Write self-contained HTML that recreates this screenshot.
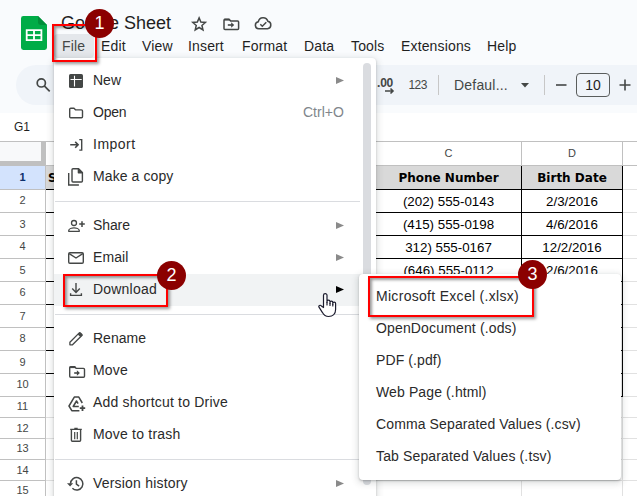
<!DOCTYPE html>
<html><head><meta charset="utf-8"><title>Google Sheet</title>
<style>
*{box-sizing:border-box;margin:0;padding:0}
html,body{width:637px;height:496px;overflow:hidden;background:#fff}
body{position:relative;font-family:"Liberation Sans",sans-serif;color:#1f1f1f}
.a{position:absolute}
.t{position:absolute;white-space:nowrap;line-height:20px;height:20px}
.hdr{left:0;top:0;width:637px;height:113px;background:#f9fbfd}
.title{font-size:18px;color:#1f1f1f;left:61px;top:13px;letter-spacing:0}
.mb{font-size:14px;color:#1f1f1f;top:36px;letter-spacing:.15px}
.tb{left:16px;top:65px;width:640px;height:40px;border-radius:20px;background:#f0f4f9}
.mi{font-size:14px;color:#2a2a2a;left:93px;letter-spacing:.2px}
.si{font-size:14px;color:#2a2a2a;left:376px;letter-spacing:.2px}
.rn{font-size:11px;color:#444746;text-align:center}
.ch{font-size:11px;color:#444746;text-align:center}
.hc{font-size:12px;font-weight:bold;color:#000;text-align:center;font-family:"DejaVu Sans","Liberation Sans",sans-serif}
.cell{font-size:13.33px;color:#000;text-align:center}
.gl{background:#e1e1e1}
.bk{background:#000}
svg{position:absolute;overflow:visible}
</style></head><body>
<!-- header -->
<div class="a hdr"></div>
<!-- logo -->
<svg style="left:21px;top:16px" width="26" height="34" viewBox="0 0 26 34">
<path d="M2.4 0h14.6L26 9v22.6a2.4 2.4 0 0 1-2.4 2.4H2.4A2.4 2.4 0 0 1 0 31.600V2.400A2.400 2.400 0 0 1 2.400 0z" fill="#00ac47"/>
<path d="M17 0l9 9h-6.600A2.400 2.400 0 0 1 17 6.600z" fill="#008f3a"/>
<path d="M4.800 13.300h16.500v11.700H4.800zM6.600 15.100v3.100h5.500v-3.100zM13.900 15.100v3.100h5.600v-3.100zM6.600 20v3.200h5.500V20zM13.900 20v3.200h5.600V20z" fill="#fff" fill-rule="evenodd"/>
</svg>
<div class="t title">Google Sheet</div>
<!-- title icons -->
<svg style="left:0;top:0" width="637" height="60" viewBox="0 0 637 60" fill="none" stroke="#444746" stroke-width="1.500" stroke-linejoin="miter"><path d="M199.10 17.90L200.86 22.07L205.38 22.46L201.95 25.43L202.98 29.84L199.10 27.50L195.22 29.84L196.25 25.43L192.82 22.46L197.34 22.07z"/><path d="M224 20.300a1 1 0 0 1 1-1h4l1.600 1.600h7a1 1 0 0 1 1 1v6.500a1 1 0 0 1-1 1H225a1 1 0 0 1-1-1z" stroke-linejoin="round"/><path d="M224 19.700h5.600" stroke-width="1.800"/><path d="M227.800 25h4" stroke-width="1.600"/><path d="M231.200 22.300l3 2.700-3 2.700z" fill="#444746" stroke="none"/><path d="M258.700 28.700a3.500 3.500 0 0 1-.400-6.950 4.900 4.900 0 0 1 9.500-.450 3.750 3.750 0 0 1-.300 7.400z" stroke-linejoin="round"/><path d="M260.300 24.200l2 2 4-4" stroke-width="1.500"/></svg>
<!-- menubar -->
<div class="a" style="left:54px;top:34px;width:40px;height:24px;border-radius:4px;background:#e4e7eb"></div>
<div class="t mb" style="left:62px;color:#444746">File</div>
<div class="t mb" style="left:101px">Edit</div>
<div class="t mb" style="left:142px">View</div>
<div class="t mb" style="left:188px">Insert</div>
<div class="t mb" style="left:242px">Format</div>
<div class="t mb" style="left:304px">Data</div>
<div class="t mb" style="left:351px">Tools</div>
<div class="t mb" style="left:401px">Extensions</div>
<div class="t mb" style="left:487px">Help</div>
<!-- toolbar -->
<div class="a tb"></div>
<svg style="left:36px;top:78px" width="15" height="15" viewBox="0 0 15 15" fill="none" stroke="#444746" stroke-width="1.700"><circle cx="5.300" cy="4.900" r="4.100"/><path d="M8.300 7.900l5.400 5.400"/></svg>
<div class="t" style="left:377px;top:73px;font-size:12px;font-weight:bold;color:#444746;letter-spacing:-.2px">.00</div>
<svg style="left:384.500px;top:88.300px" width="9" height="6" viewBox="0 0 9 6" fill="none" stroke="#444746" stroke-width="1.600"><path d="M0 3h8M5.500 .500L8 3 5.500 5.500"/></svg>
<div class="t" style="left:408.500px;top:75px;font-size:12px;color:#444746;letter-spacing:-.6px">123</div>
<div class="a" style="left:438px;top:75px;width:1px;height:20px;background:#c7c7c7"></div>
<div class="t" style="left:454px;top:75px;font-size:14px;color:#444746;letter-spacing:.2px">Defaul...</div>
<svg style="left:521px;top:83px" width="8" height="4.500" viewBox="0 0 8 4.500"><path d="M0 0h8L4 4.500z" fill="#444746"/></svg>
<div class="a" style="left:544px;top:75px;width:1px;height:20px;background:#c7c7c7"></div>
<svg style="left:555px;top:80px" width="12" height="10" viewBox="0 0 12 10"><path d="M1 5h10.500" stroke="#444746" stroke-width="1.600"/></svg>
<div class="a" style="left:576px;top:73px;width:34px;height:24px;border:1px solid #5a5d5c;border-radius:4px;background:#f0f4f9"></div>
<div class="t" style="left:576px;width:34px;text-align:center;top:75px;font-size:14px;color:#1f1f1f">10</div>
<svg style="left:619px;top:79px" width="12" height="12" viewBox="0 0 12 12"><path d="M.5 6h11M6 .5v11" stroke="#444746" stroke-width="1.600"/></svg>
<!-- name box -->
<div class="t" style="left:14px;top:117px;font-size:12px;color:#1f1f1f">G1</div>
<!-- grid -->
<div class="a" style="left:0px;top:141px;width:637px;height:360px;background:#fff"></div>
<div class="a" style="left:46px;top:189px;width:591px;height:1px;background:#e1e1e1"></div>
<div class="a" style="left:46px;top:212px;width:591px;height:1px;background:#e1e1e1"></div>
<div class="a" style="left:46px;top:235px;width:591px;height:1px;background:#e1e1e1"></div>
<div class="a" style="left:46px;top:258px;width:591px;height:1px;background:#e1e1e1"></div>
<div class="a" style="left:46px;top:281px;width:591px;height:1px;background:#e1e1e1"></div>
<div class="a" style="left:46px;top:304px;width:591px;height:1px;background:#e1e1e1"></div>
<div class="a" style="left:46px;top:327px;width:591px;height:1px;background:#e1e1e1"></div>
<div class="a" style="left:46px;top:350px;width:591px;height:1px;background:#e1e1e1"></div>
<div class="a" style="left:46px;top:373px;width:591px;height:1px;background:#e1e1e1"></div>
<div class="a" style="left:46px;top:396px;width:591px;height:1px;background:#e1e1e1"></div>
<div class="a" style="left:46px;top:417px;width:591px;height:1px;background:#e1e1e1"></div>
<div class="a" style="left:46px;top:438px;width:591px;height:1px;background:#e1e1e1"></div>
<div class="a" style="left:46px;top:459px;width:591px;height:1px;background:#e1e1e1"></div>
<div class="a" style="left:46px;top:480px;width:591px;height:1px;background:#e1e1e1"></div>
<div class="a" style="left:521px;top:166px;width:1px;height:340px;background:#e1e1e1"></div>
<div class="a" style="left:622px;top:166px;width:1px;height:340px;background:#e1e1e1"></div>
<div class="a" style="left:0px;top:141px;width:637px;height:1px;background:#c0c0c0"></div>
<div class="a" style="left:0px;top:165px;width:637px;height:1px;background:#c0c0c0"></div>
<div class="a" style="left:0px;top:142px;width:46px;height:23px;background:#f8f9fa"></div>
<div class="a" style="left:521px;top:142px;width:1px;height:23px;background:#c0c0c0"></div>
<div class="a" style="left:622px;top:142px;width:1px;height:23px;background:#c0c0c0"></div>
<div class="t ch" style="left:375px;top:143px;width:147px">C</div>
<div class="t ch" style="left:522px;top:143px;width:100px">D</div>
<div class="a" style="left:41px;top:142px;width:4px;height:24px;background:#c0c0c0"></div>
<div class="a" style="left:0px;top:161px;width:45px;height:4px;background:#c0c0c0"></div>
<div class="a" style="left:45px;top:141px;width:1px;height:360px;background:#c0c0c0"></div>
<div class="a" style="left:0px;top:166px;width:45px;height:23px;background:#d3e3fd"></div>
<div class="a" style="left:0px;top:189px;width:45px;height:1px;background:#c0c0c0"></div>
<div class="a" style="left:0px;top:212px;width:45px;height:1px;background:#c0c0c0"></div>
<div class="a" style="left:0px;top:235px;width:45px;height:1px;background:#c0c0c0"></div>
<div class="a" style="left:0px;top:258px;width:45px;height:1px;background:#c0c0c0"></div>
<div class="a" style="left:0px;top:281px;width:45px;height:1px;background:#c0c0c0"></div>
<div class="a" style="left:0px;top:304px;width:45px;height:1px;background:#c0c0c0"></div>
<div class="a" style="left:0px;top:327px;width:45px;height:1px;background:#c0c0c0"></div>
<div class="a" style="left:0px;top:350px;width:45px;height:1px;background:#c0c0c0"></div>
<div class="a" style="left:0px;top:373px;width:45px;height:1px;background:#c0c0c0"></div>
<div class="a" style="left:0px;top:396px;width:45px;height:1px;background:#c0c0c0"></div>
<div class="a" style="left:0px;top:417px;width:45px;height:1px;background:#c0c0c0"></div>
<div class="a" style="left:0px;top:438px;width:45px;height:1px;background:#c0c0c0"></div>
<div class="a" style="left:0px;top:459px;width:45px;height:1px;background:#c0c0c0"></div>
<div class="a" style="left:0px;top:480px;width:45px;height:1px;background:#c0c0c0"></div>
<div class="t rn" style="left:0px;top:167px;width:45px;font-weight:bold;color:#0b2f6b">1</div>
<div class="t rn" style="left:0px;top:190px;width:45px">2</div>
<div class="t rn" style="left:0px;top:214px;width:45px">3</div>
<div class="t rn" style="left:0px;top:236px;width:45px">4</div>
<div class="t rn" style="left:0px;top:260px;width:45px">5</div>
<div class="t rn" style="left:0px;top:282px;width:45px">6</div>
<div class="t rn" style="left:0px;top:306px;width:45px">7</div>
<div class="t rn" style="left:0px;top:328px;width:45px">8</div>
<div class="t rn" style="left:0px;top:352px;width:45px">9</div>
<div class="t rn" style="left:0px;top:374px;width:45px">10</div>
<div class="t rn" style="left:0px;top:396px;width:45px">11</div>
<div class="t rn" style="left:0px;top:418px;width:45px">12</div>
<div class="t rn" style="left:0px;top:438px;width:45px">13</div>
<div class="t rn" style="left:0px;top:460px;width:45px">14</div>
<div class="t rn" style="left:0px;top:480px;width:45px">15</div>
<div class="a" style="left:46px;top:166px;width:576px;height:23px;background:#d9d9d9"></div>
<div class="a" style="left:46px;top:189px;width:577px;height:1px;background:#000"></div>
<div class="a" style="left:46px;top:212px;width:577px;height:1px;background:#000"></div>
<div class="a" style="left:46px;top:235px;width:577px;height:1px;background:#000"></div>
<div class="a" style="left:46px;top:258px;width:577px;height:1px;background:#000"></div>
<div class="a" style="left:46px;top:281px;width:577px;height:1px;background:#000"></div>
<div class="a" style="left:46px;top:304px;width:577px;height:1px;background:#000"></div>
<div class="a" style="left:46px;top:327px;width:577px;height:1px;background:#000"></div>
<div class="a" style="left:46px;top:350px;width:577px;height:1px;background:#000"></div>
<div class="a" style="left:46px;top:373px;width:577px;height:1px;background:#000"></div>
<div class="a" style="left:46px;top:396px;width:577px;height:1px;background:#000"></div>
<div class="a" style="left:521px;top:166px;width:1px;height:231px;background:#000"></div>
<div class="a" style="left:622px;top:166px;width:1px;height:231px;background:#000"></div>
<div class="t hc" style="left:48px;top:168px;width:40px;text-align:left">S</div>
<div class="t hc" style="left:375px;top:168px;width:147px">Phone Number</div>
<div class="t hc" style="left:522px;top:168px;width:100px">Birth Date</div>
<div class="t cell" style="left:375px;top:192px;width:147px">(202) 555-0143</div>
<div class="t cell" style="left:522px;top:192px;width:100px">2/3/2016</div>
<div class="t cell" style="left:375px;top:215px;width:147px">(415) 555-0198</div>
<div class="t cell" style="left:522px;top:215px;width:100px">4/6/2016</div>
<div class="t cell" style="left:375px;top:238px;width:147px">312) 555-0167</div>
<div class="t cell" style="left:522px;top:238px;width:100px">12/2/2016</div>
<div class="t cell" style="left:375px;top:261px;width:147px">(646) 555-0112</div>
<div class="t cell" style="left:522px;top:261px;width:100px">2/6/2016</div>
<!-- menu -->
<div class="a" style="left:54px;top:58px;width:322px;height:452px;background:#fff;border-radius:4px;box-shadow:0 2px 6px 2px rgba(60,64,67,.15),0 1px 2px rgba(60,64,67,.3)"></div>
<div class="a" style="left:54px;top:274px;width:310px;height:32px;background:#f1f3f4"></div>
<div class="a" style="left:363px;top:63px;width:8px;height:422px;border-radius:4px;background:#dadce0"></div>
<div class="a" style="left:55px;top:201px;width:305px;height:1px;background:#dadce0"></div>
<div class="a" style="left:55px;top:314px;width:305px;height:1px;background:#dadce0"></div>
<div class="a" style="left:55px;top:459px;width:305px;height:1px;background:#dadce0"></div>
<div class="t mi" style="top:70px;letter-spacing:0.0px">New</div>
<div class="t mi" style="top:102px;letter-spacing:-0.2px">Open</div>
<div class="t mi" style="top:134px;letter-spacing:0.5px">Import</div>
<div class="t mi" style="top:166px;letter-spacing:0.1px">Make a copy</div>
<div class="t mi" style="top:215px;letter-spacing:-0.1px">Share</div>
<div class="t mi" style="top:247px;letter-spacing:0.1px">Email</div>
<div class="t mi" style="top:279px;letter-spacing:0.2px">Download</div>
<div class="t mi" style="top:328px;letter-spacing:0px">Rename</div>
<div class="t mi" style="top:360px">Move</div>
<div class="t mi" style="top:392px">Add shortcut to Drive</div>
<div class="t mi" style="top:424px">Move to trash</div>
<div class="t mi" style="top:473px">Version history</div>
<div class="t" style="left:303px;top:102px;font-size:14px;color:#80868b">Ctrl+O</div>
<!-- arrows -->
<svg style="left:336px;top:77px" width="8" height="7" viewBox="0 0 8 7"><path d="M0 0l8 3.500-8 3.500z" fill="#8a8a8a"/></svg>
<svg style="left:336px;top:222px" width="8" height="7" viewBox="0 0 8 7"><path d="M0 0l8 3.500-8 3.500z" fill="#8a8a8a"/></svg>
<svg style="left:336px;top:254px" width="8" height="7" viewBox="0 0 8 7"><path d="M0 0l8 3.500-8 3.500z" fill="#8a8a8a"/></svg>
<svg style="left:336px;top:286px" width="8" height="7" viewBox="0 0 8 7"><path d="M0 0l8 3.500-8 3.500z" fill="#000"/></svg>
<svg style="left:336px;top:480px" width="8" height="7" viewBox="0 0 8 7"><path d="M0 0l8 3.500-8 3.500z" fill="#8a8a8a"/></svg>
<!-- menu icons -->
<svg style="left:0;top:0" width="637" height="496" viewBox="0 0 637 496" fill="none" stroke="#444746" stroke-width="1.400" stroke-linejoin="round" stroke-linecap="butt">
<!-- new -->
<rect x="69" y="74" width="14" height="14" rx="1.600" fill="#444746" stroke="none"/>
<path d="M74.500 75.700V86.500M70.500 79.500H81.700" stroke="#fff" stroke-width="1.100"/>
<!-- open -->
<path d="M69.700 109.200a1 1 0 0 1 1-1h3.300l1.700 1.700h5.800a1 1 0 0 1 1 1v5.800a1 1 0 0 1-1 1H70.700a1 1 0 0 1-1-1z"/>
<!-- import -->
<path d="M70.200 144.800h7.600M75.200 141.900l2.900 2.900-2.900 2.900" stroke-linejoin="miter" stroke-width="1.600"/><path d="M79.300 139.600h2.400v10.500h-2.400" stroke-linejoin="miter"/>
<!-- copy -->
<path d="M72 169.700a1 1 0 0 1 1-1h5.400l4 4v8.300a1 1 0 0 1-1 1H73a1 1 0 0 1-1-1z"/>
<path d="M78.400 168.700l4 4h-4z" fill="#444746"/>
<path d="M68.700 173v12h10.200" stroke-linejoin="miter"/>
<!-- share -->
<circle cx="74" cy="223" r="2.500" stroke-width="1.300"/>
<path d="M68.700 231.300v-.600c0-1.900 3.300-2.800 5.300-2.800s5.300.900 5.300 2.800v.600z" stroke-width="1.300"/>
<path d="M79.200 224.100h5.600M82 221.300v5.600" stroke-width="1.500"/>
<!-- email -->
<rect x="68.700" y="252.700" width="14.600" height="10.600" rx="1.200"/>
<path d="M69.200 253.600l6.800 4.400 6.800-4.400"/>
<!-- download -->
<path d="M76 283v9M72.200 288.600l3.800 3.800 3.800-3.800M70.600 293.300v2.100h10.800v-2.100" stroke-linejoin="miter"/>
<!-- rename -->
<path d="M69.900 344.800v-2.600l9.600-9.600 2.600 2.600-9.600 9.600z" stroke-width="1.300"/>
<path d="M77.700 334.400l1.900-1.900a.8.800 0 0 1 1.100 0l1.600 1.600a.8.800 0 0 1 0 1.100L80.400 337.100z" fill="#444746" stroke="none"/>
<!-- move -->
<path d="M69.700 367.800a1 1 0 0 1 1-1h4l1.600 1.600h7.200a1 1 0 0 1 1 1v6.800a1 1 0 0 1-1 1H70.700a1 1 0 0 1-1-1z"/>
<path d="M69.700 367.300h5.800" stroke-width="1.600"/>
<path d="M74.200 373h3.500" stroke-width="1.600"/>
<path d="M76.900 370.200l3 2.800-3 2.800z" fill="#444746" stroke="none"/>
<!-- add shortcut -->
<path d="M79.400 410.700h-7.600l-2.800-4.700 5.300-8.900h4.500l3.500 5.900" stroke-width="1.500" stroke-linejoin="round"/>
<path d="M78.800 406.500h-5.600l3.300-5.500 1.600 2.700" stroke-width="1.500"/>
<path d="M79.800 408.200h5.400M82.500 405.500v5.400" stroke-width="1.800"/>
<!-- trash -->
<path d="M70.200 429.300h11.600M74.300 428.300h3.400" stroke-width="1.300"/>
<path d="M71.400 429.500v10.700a1 1 0 0 0 1 1h7.200a1 1 0 0 0 1-1V429.500" stroke-width="1.400"/>
<path d="M74.700 432v7.200M77.300 432v7.200" stroke-width="1.200"/>
<!-- history -->
<path d="M70.500 483.800a6.200 6.200 0 1 1 1.900 4.500" stroke-width="1.500"/>
<path d="M67 483.200h6.200l-3.100 3.300z" fill="#444746" stroke="none"/>
<path d="M76.400 480.300v3.900l2.700 1.900" stroke-width="1.500" stroke-linejoin="miter"/>
</svg>
<!-- submenu -->
<div class="a" style="left:359px;top:274px;width:262px;height:206px;background:#fff;border-radius:4px;box-shadow:0 2px 6px 2px rgba(60,64,67,.15),0 1px 2px rgba(60,64,67,.3)"></div>
<div class="t si" style="top:286px;letter-spacing:0.3px">Microsoft Excel (.xlsx)</div>
<div class="t si" style="top:318px;letter-spacing:0.15px">OpenDocument (.ods)</div>
<div class="t si" style="top:350px;letter-spacing:0.1px">PDF (.pdf)</div>
<div class="t si" style="top:382px;letter-spacing:0.12px">Web Page (.html)</div>
<div class="t si" style="top:414px;letter-spacing:0.12px">Comma Separated Values (.csv)</div>
<div class="t si" style="top:446px;letter-spacing:0.14px">Tab Separated Values (.tsv)</div>
<svg style="left:318px;top:293px" width="19" height="25" viewBox="0 0 19 25" fill="#fff" stroke="#1c1c2e" stroke-width="1.200" stroke-linejoin="round" stroke-linecap="round"><path d="M5.500 14.500V2.300a1.750 1.750 0 0 1 3.500 0V9.500V8.700a1.500 1.500 0 0 1 3 0V10.500V9.600a1.400 1.400 0 0 1 2.800 0V11.300V10.600a1.400 1.400 0 0 1 2.800 0V16.500c0 4.200-2.800 7-7 7-3.300 0-5-1.800-6.300-4.200L1 14.200c-.9-1.600 1.200-2.700 2.400-1.200z"/><path d="M9 9.500V12M12 10.500V12.500M14.800 11.300V13" fill="none"/></svg>
<!-- annotations -->
<div class="a" style="left:52px;top:24px;width:45px;height:38px;border:2px solid #f00;box-shadow:2px 2px 3px rgba(0,0,0,.4),inset 2px 2px 3px rgba(0,0,0,.4)"></div>
<div class="a" style="left:63px;top:274px;width:105px;height:33px;border:2px solid #f00;box-shadow:2px 2px 3px rgba(0,0,0,.4),inset 2px 2px 3px rgba(0,0,0,.4)"></div>
<div class="a" style="left:368px;top:276px;width:166px;height:41px;border:2px solid #f00;box-shadow:2px 2px 3px rgba(0,0,0,.4),inset 2px 2px 3px rgba(0,0,0,.4)"></div>
<div class="a" style="left:85px;top:9px;width:29px;height:29px;border-radius:50%;background:#8b0000;color:#fff;font-size:18px;line-height:29px;text-align:center">1</div>
<div class="a" style="left:157px;top:261px;width:29px;height:29px;border-radius:50%;background:#8b0000;color:#fff;font-size:18px;line-height:29px;text-align:center">2</div>
<div class="a" style="left:518px;top:260px;width:29px;height:29px;border-radius:50%;background:#8b0000;color:#fff;font-size:18px;line-height:29px;text-align:center">3</div>
</body></html>
